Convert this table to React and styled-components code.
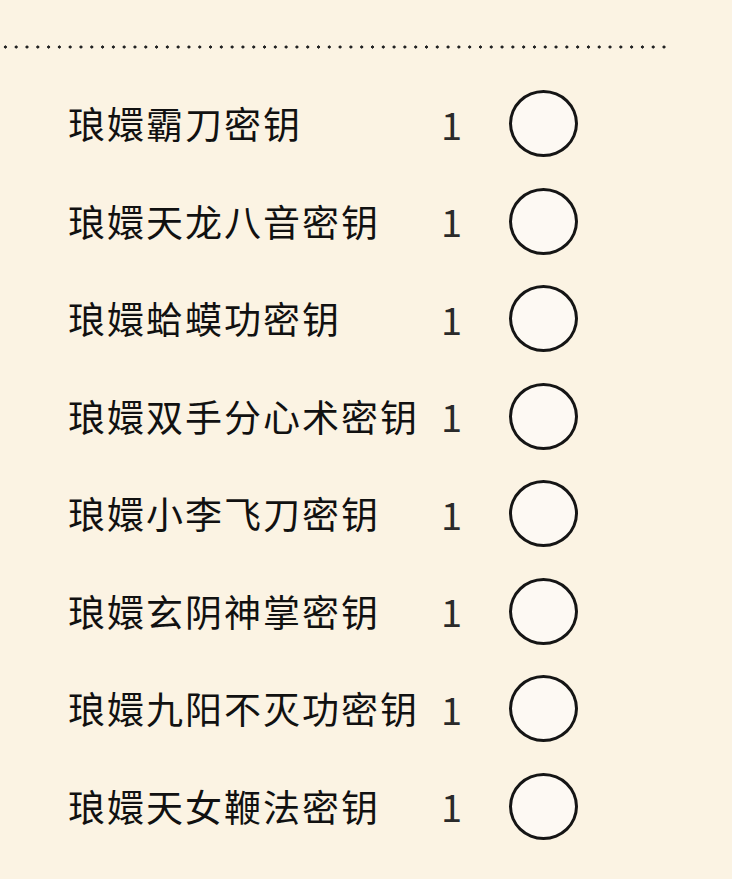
import React from 'react'
import styled, { createGlobalStyle } from 'styled-components'

const Global = createGlobalStyle`
    html, body {
        margin: 0;
        padding: 0;
        background-color: #FBF3E3;
    }
    body {
        font-family: "Noto Sans CJK SC", "Noto Sans", sans-serif;
        color: #111;
    }
`

const Page = styled.div`
    width: 732px;
    height: 879px;
    padding-top: 45px;
    box-sizing: border-box;
    overflow: hidden;
`

const Dots = styled.div`
    width: 672px;
    height: 4px;
    background-image: radial-gradient(circle, #222 1.4px, transparent 1.8px);
    background-size: 10.8px 4px;
    background-position: 0 0;
`

const List = styled.div`
    display: grid;
    grid-auto-rows: 97.5px;
    padding-top: 26px;
    padding-left: 68px;
`

const Row = styled.div`
    display: grid;
    grid-template-columns: 372px 69px 70px;
    align-items: center;
`

const Name = styled.div`
    font-size: 37px;
    letter-spacing: 2px;
    line-height: 1;
    white-space: nowrap;
`

const Count = styled.div`
    font-size: 38px;
    line-height: 1;
    color: #2a2a2a;
    padding-left: 1px;
`

const Check = styled.div`
    width: 63px;
    height: 61px;
    border: 3px solid #151515;
    border-radius: 50%;
    background-color: #FDF9F3;
`

const items = [
    '琅嬛霸刀密钥',
    '琅嬛天龙八音密钥',
    '琅嬛蛤蟆功密钥',
    '琅嬛双手分心术密钥',
    '琅嬛小李飞刀密钥',
    '琅嬛玄阴神掌密钥',
    '琅嬛九阳不灭功密钥',
    '琅嬛天女鞭法密钥',
]

function App() {
    return (
        <>
        <Global />
        <Page>
            <Dots />
            <List>
            {items.map(name => (
                <Row key={name}>
                    <Name>{name}</Name>
                    <Count>1</Count>
                    <Check />
                </Row>
            ))}
            </List>
        </Page>
        </>
    )
}

export default App
